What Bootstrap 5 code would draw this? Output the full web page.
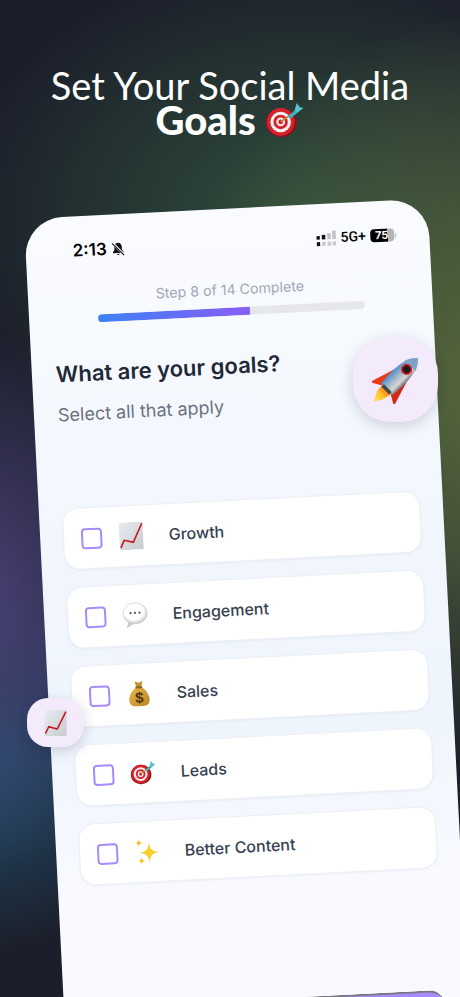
<!DOCTYPE html>
<html lang="en">
<head>
    <meta charset="UTF-8">
    <meta name="viewport" content="width=device-width, initial-scale=1.0">
    <title>Set Your Social Media Goals</title>
    <link rel="stylesheet" href="https://cdn.jsdelivr.net/npm/bootstrap@5.3.0/dist/css/bootstrap.min.css">
    <style>
        html, body {
            height: 997px;
            overflow: hidden;
        }
        body {
            position: relative;
            font-family: "Inter", "Liberation Sans", sans-serif;
            background-color: #1c1f2b;
            background-image:
                radial-gradient(ellipse 330px 380px at 500px 390px, #56683c 0%, rgba(80, 96, 60, .75) 45%, rgba(60, 80, 60, 0) 100%),
                radial-gradient(ellipse 340px 260px at 300px 220px, rgba(50, 84, 62, .9) 0%, rgba(50, 80, 60, 0) 100%),
                radial-gradient(ellipse 210px 270px at -30px 600px, #4a4278 0%, rgba(74, 66, 116, 0) 100%),
                radial-gradient(ellipse 190px 190px at -20px 760px, #21506e 0%, rgba(33, 80, 110, 0) 100%);
        }
        .promo-title {
            padding-top: 68px;
            height: 219px;
            margin: 0;
            text-align: center;
            color: #fff;
            font-family: "Lato", sans-serif;
            font-size: 38px;
            font-weight: 400;
            line-height: 34px;
        }
        .promo-title strong {
            font-size: 40px;
            font-weight: 900;
        }
        .promo-title svg {
            width: 39px;
            height: 36px;
            vertical-align: -3px;
        }
        .phone-screen {
            width: 404px;
            height: 800px;
            margin-left: 23.5px;
            overflow: hidden;
            transform: rotate(-2.9deg);
            transform-origin: 0 0;
            border-radius: 38px 38px 0 0;
            background: linear-gradient(180deg, #f9fbff 0%, #f1f6fd 45%, #eff5fd 65%, #f8faff 85%);
            padding: 0 23px;
        }
        .status-line {
            padding: 24px 10px 0 24px;
            height: 72px;
            color: #000;
        }
        .status-time {
            font-size: 17px;
            font-weight: 600;
            line-height: 20px;
        }
        .status-net {
            font-size: 14px;
            font-weight: 500;
            font-family: "Roboto", sans-serif;
        }
        .status-batt {
            width: 24px;
            height: 13px;
            border-radius: 4px;
            background: linear-gradient(90deg, #000 72%, #b5b5b8 72%);
            color: #fff;
            font-size: 11px;
            font-weight: 700;
            line-height: 13px;
            text-align: center;
        }
        .status-nub {
            width: 1.5px;
            height: 4px;
            background: #b5b5b8;
            margin-left: 1px;
        }
        .step-text {
            color: #a2a8b4;
            font-size: 14.2px;
            line-height: 18px;
            text-align: center;
        }
        .step-progress {
            width: 267px;
            height: 8px;
            margin: 9px auto 0;
            border-radius: 4px;
            background: #e5e7eb;
        }
        .step-progress .progress-bar {
            background: linear-gradient(90deg, #3b82f6, #8b5cf6);
        }
        .goal-heading {
            margin: 35px 0 0;
            padding-left: 1px;
            color: #1f2937;
            font-size: 22px;
            font-weight: 600;
            line-height: 30px;
        }
        .goal-sub {
            margin: 13px 0 0;
            padding-left: 1px;
            color: #6b7280;
            font-size: 18px;
            line-height: 26px;
        }
        .goal-list {
            margin-top: 80px;
            gap: 17px;
        }
        .goal-row {
            height: 62px;
            padding-left: 17px;
            border-radius: 16px;
            background: #fff;
            border: 1px solid #eceff4;
            box-shadow: 0 1px 2px rgba(30, 40, 70, .05);
        }
        .goal-row .form-check-input {
            flex: none;
            width: 21px;
            height: 21px;
            margin: 0;
            border: 2px solid #a78bfa;
            border-radius: 4px;
        }
        .goal-icon {
            flex: none;
            width: 26px;
            height: 28px;
            margin-left: 15.5px;
        }
        .goal-label {
            margin-left: 25px;
            color: #374151;
            font-size: 16px;
            font-weight: 500;
        }
        .next-btn {
            width: 358px;
            height: 60px;
            margin-top: 122px;
            border: 0;
            border-top: 2px solid #77777f;
            border-radius: 16px;
            background: #a78bfa;
        }
        .float-tile {
            position: absolute;
            background: #f3eafc;
            box-shadow: 0 4px 14px rgba(20, 20, 50, .18);
        }
        .float-rocket {
            left: 353px;
            top: 337px;
            width: 85px;
            height: 85px;
            border-radius: 37px;
        }
        .float-rocket svg {
            width: 48px;
            height: 48px;
        }
        .float-chart {
            left: 27px;
            top: 698px;
            width: 57px;
            height: 49px;
            border-radius: 21px;
        }
        .float-chart svg {
            width: 23px;
            height: 26px;
        }
    </style>
</head>
<body>
    <svg width="0" height="0" class="d-block">
        <defs>
            <linearGradient id="chartBg" x1="0" y1="0" x2="1" y2="1">
                <stop offset="0" stop-color="#e9edf1"/>
                <stop offset="1" stop-color="#c6cbd0"/>
            </linearGradient>
            <radialGradient id="bubbleBg" cx=".45" cy=".4" r=".65">
                <stop offset=".6" stop-color="#ffffff"/>
                <stop offset="1" stop-color="#b9bcc0"/>
            </radialGradient>
            <linearGradient id="bagBg" x1="0" y1="0" x2="1" y2="1">
                <stop offset="0" stop-color="#eab84c"/>
                <stop offset="1" stop-color="#b98525"/>
            </linearGradient>
            <linearGradient id="rocketBody" x1="0" y1="0" x2="1" y2="0">
                <stop offset="0" stop-color="#4f8cc9"/>
                <stop offset=".45" stop-color="#a7bccd"/>
                <stop offset=".75" stop-color="#d8d8d4"/>
                <stop offset="1" stop-color="#6e7274"/>
            </linearGradient>
            <linearGradient id="rocketFlame" x1="0" y1="0" x2="0" y2="1">
                <stop offset="0" stop-color="#ff6a13"/>
                <stop offset=".5" stop-color="#ffc62e"/>
                <stop offset="1" stop-color="#ffe15a"/>
            </linearGradient>
            <symbol id="emojiChart" viewBox="0 0 22 26">
                <rect width="22" height="26" fill="url(#chartBg)"/>
                <path d="M1 23.5 4.3 16.7 12.7 19 21.4 1.7" fill="none" stroke="#c4141c" stroke-width="1.5"/>
            </symbol>
            <symbol id="emojiBubble" viewBox="0 0 26 28">
                <path d="M6 20 4 27 12 22.5Z" fill="#c9cbce"/>
                <ellipse cx="13" cy="12.5" rx="12.2" ry="10.5" fill="url(#bubbleBg)" stroke="#c6c8cc" stroke-width=".6"/>
                <circle cx="8.5" cy="12" r="1.1" fill="#555a63"/>
                <circle cx="13" cy="12" r="1.1" fill="#555a63"/>
                <circle cx="17.5" cy="12" r="1.1" fill="#555a63"/>
            </symbol>
            <symbol id="emojiBag" viewBox="0 0 26 28">
                <path d="M9 1.5 13 3 17 1.5 15.5 7.5H10.5Z" fill="#c58f2e"/>
                <path d="M10 7.5H16C21 11 24 17 23 22 22 26 19 26.5 13 26.5S4 26 3 22C2 17 5 11 10 7.5Z" fill="url(#bagBg)"/>
                <rect x="9.5" y="6.5" width="7" height="2" rx="1" fill="#8a6420"/>
                <text x="13" y="23" text-anchor="middle" font-family="Liberation Sans, sans-serif" font-size="15" font-weight="700" fill="#4a3510">$</text>
            </symbol>
            <symbol id="emojiTarget" viewBox="0 0 30 28">
                <ellipse cx="12.5" cy="16" rx="12" ry="11.2" fill="#8e1016"/>
                <circle cx="12" cy="15.5" r="10.8" fill="#d3222b"/>
                <circle cx="12" cy="15.5" r="8" fill="#f4eeee"/>
                <circle cx="12" cy="15.5" r="5.6" fill="#d3222b"/>
                <circle cx="12" cy="15.5" r="3.4" fill="#f4eeee"/>
                <circle cx="12" cy="15.5" r="1.8" fill="#d3222b"/>
                <path d="M12 15.5 21 9" stroke="#c08a2a" stroke-width="1.2"/>
                <path d="M17.5 11.5 24 5.5 25.5 8 19.5 13Z" fill="#3fb0bd"/>
                <path d="M23 6 24.5 .8 27 4 29.8 4.6 25 8.4Z" fill="#57c6cf"/>
            </symbol>
            <symbol id="emojiSparkle" viewBox="0 0 26 28">
                <path d="M15 5C16 12 18 14 25 15 18 16 16 18 15 25 14 18 12 16 5 15 12 14 14 12 15 5Z" fill="#fbd02e"/>
                <path d="M5 1C5.4 3.800 6.200 4.600 9 5 6.200 5.400 5.400 6.200 5 9 4.600 6.200 3.800 5.400 1 5 3.800 4.600 4.600 3.800 5 1Z" fill="#f7c52a"/>
                <path d="M7 19C7.400 21.800 8.200 22.600 11 23 8.200 23.400 7.400 24.200 7 27 6.600 24.200 5.800 23.400 3 23 5.800 22.600 6.600 21.800 7 19Z" fill="#f7c52a"/>
            </symbol>
        </defs>
    </svg>

    <h1 class="promo-title">Set Your Social Media<br><strong>Goals</strong> <svg><use href="#emojiTarget"/></svg></h1>

    <div class="phone-screen">
        <div class="status-line d-flex justify-content-between align-items-start">
            <div class="d-flex align-items-center gap-1">
                <span class="status-time">2:13</span>
                <svg width="15" height="15" viewBox="0 0 16 16">
                    <path d="M8 1.500C5.500 1.500 4 3.500 4 6V9L2.300 11.500V12.500H13.700V11.500L12 9V6C12 3.500 10.500 1.500 8 1.500Z" fill="#111"/>
                    <path d="M6.500 13.500a1.600 1.600 0 0 0 3 0Z" fill="#111"/>
                    <path d="M2 1.500 14.500 15" stroke="#f7f9fe" stroke-width="2.600"/>
                    <path d="M1.800 2 14 15" stroke="#111" stroke-width="1.200"/>
                </svg>
            </div>
            <div class="d-flex align-items-center gap-1">
                <svg width="20" height="16" viewBox="0 0 20 16">
                    <rect x="0" y="5" width="3.500" height="3.500" fill="#111"/>
                    <rect x="5.500" y="4" width="3.500" height="4.500" fill="#111"/>
                    <rect x="11" y="2.500" width="3.500" height="6" fill="#bfc1c5"/>
                    <rect x="16" y="0" width="3.500" height="8.500" fill="#bfc1c5"/>
                    <rect x="0" y="11" width="3.500" height="4" fill="#111"/>
                    <rect x="5.500" y="11" width="3.500" height="4" fill="#c9cbcf"/>
                    <rect x="11" y="11" width="3.500" height="4" fill="#c9cbcf"/>
                    <rect x="16" y="11" width="3.500" height="4" fill="#c9cbcf"/>
                </svg>
                <span class="status-net">5G+</span>
                <div class="d-flex align-items-center">
                    <span class="status-batt">75</span>
                    <span class="status-nub"></span>
                </div>
            </div>
        </div>

        <div class="step-text">Step 8 of 14 Complete</div>
        <div class="progress step-progress">
            <div class="progress-bar" style="width: 57.14%"></div>
        </div>

        <h2 class="goal-heading">What are your goals?</h2>
        <p class="goal-sub">Select all that apply</p>

        <div class="goal-list d-flex flex-column">
            <label class="goal-row d-flex align-items-center">
                <input class="form-check-input" type="checkbox">
                <svg class="goal-icon"><use href="#emojiChart"/></svg>
                <span class="goal-label">Growth</span>
            </label>
            <label class="goal-row d-flex align-items-center">
                <input class="form-check-input" type="checkbox">
                <svg class="goal-icon"><use href="#emojiBubble"/></svg>
                <span class="goal-label">Engagement</span>
            </label>
            <label class="goal-row d-flex align-items-center">
                <input class="form-check-input" type="checkbox">
                <svg class="goal-icon"><use href="#emojiBag"/></svg>
                <span class="goal-label">Sales</span>
            </label>
            <label class="goal-row d-flex align-items-center">
                <input class="form-check-input" type="checkbox">
                <svg class="goal-icon"><use href="#emojiTarget"/></svg>
                <span class="goal-label">Leads</span>
            </label>
            <label class="goal-row d-flex align-items-center">
                <input class="form-check-input" type="checkbox">
                <svg class="goal-icon"><use href="#emojiSparkle"/></svg>
                <span class="goal-label">Better Content</span>
            </label>
        </div>

        <button class="btn next-btn d-block" type="button"></button>
    </div>

    <div class="float-tile float-rocket d-flex align-items-center justify-content-center">
        <svg viewBox="0 0 48 48">
            <g transform="rotate(45 24 24)">
                <path d="M18.500 36C16.500 44 21 50 23.500 55 27 50 31.500 44 29.500 36Z" fill="url(#rocketFlame)"/>
                <path d="M15 18 7 44 19 37Z" fill="#ea3a1c"/>
                <path d="M33 18 41 44 29 37Z" fill="#d42a1c"/>
                <path d="M24 -7C31 -1 35 12 32 37H16C13 12 17 -1 24 -7Z" fill="url(#rocketBody)"/>
                <path d="M24 -7C27.500 -4 30 0 31.500 4H16.500C18 0 20.500 -4 24 -7Z" fill="#7da3c6"/>
                <circle cx="24" cy="9" r="5.600" fill="#d91f1f"/>
                <circle cx="24" cy="9" r="3.800" fill="#1b1c22"/>
                <rect x="18.500" y="35.500" width="11" height="3.500" fill="#43474c"/>
            </g>
        </svg>
    </div>
    <div class="float-tile float-chart d-flex align-items-center justify-content-center">
        <svg><use href="#emojiChart"/></svg>
    </div>

    <script src="https://cdn.jsdelivr.net/npm/bootstrap@5.3.0/dist/js/bootstrap.bundle.min.js"></script>
</body>
</html>
